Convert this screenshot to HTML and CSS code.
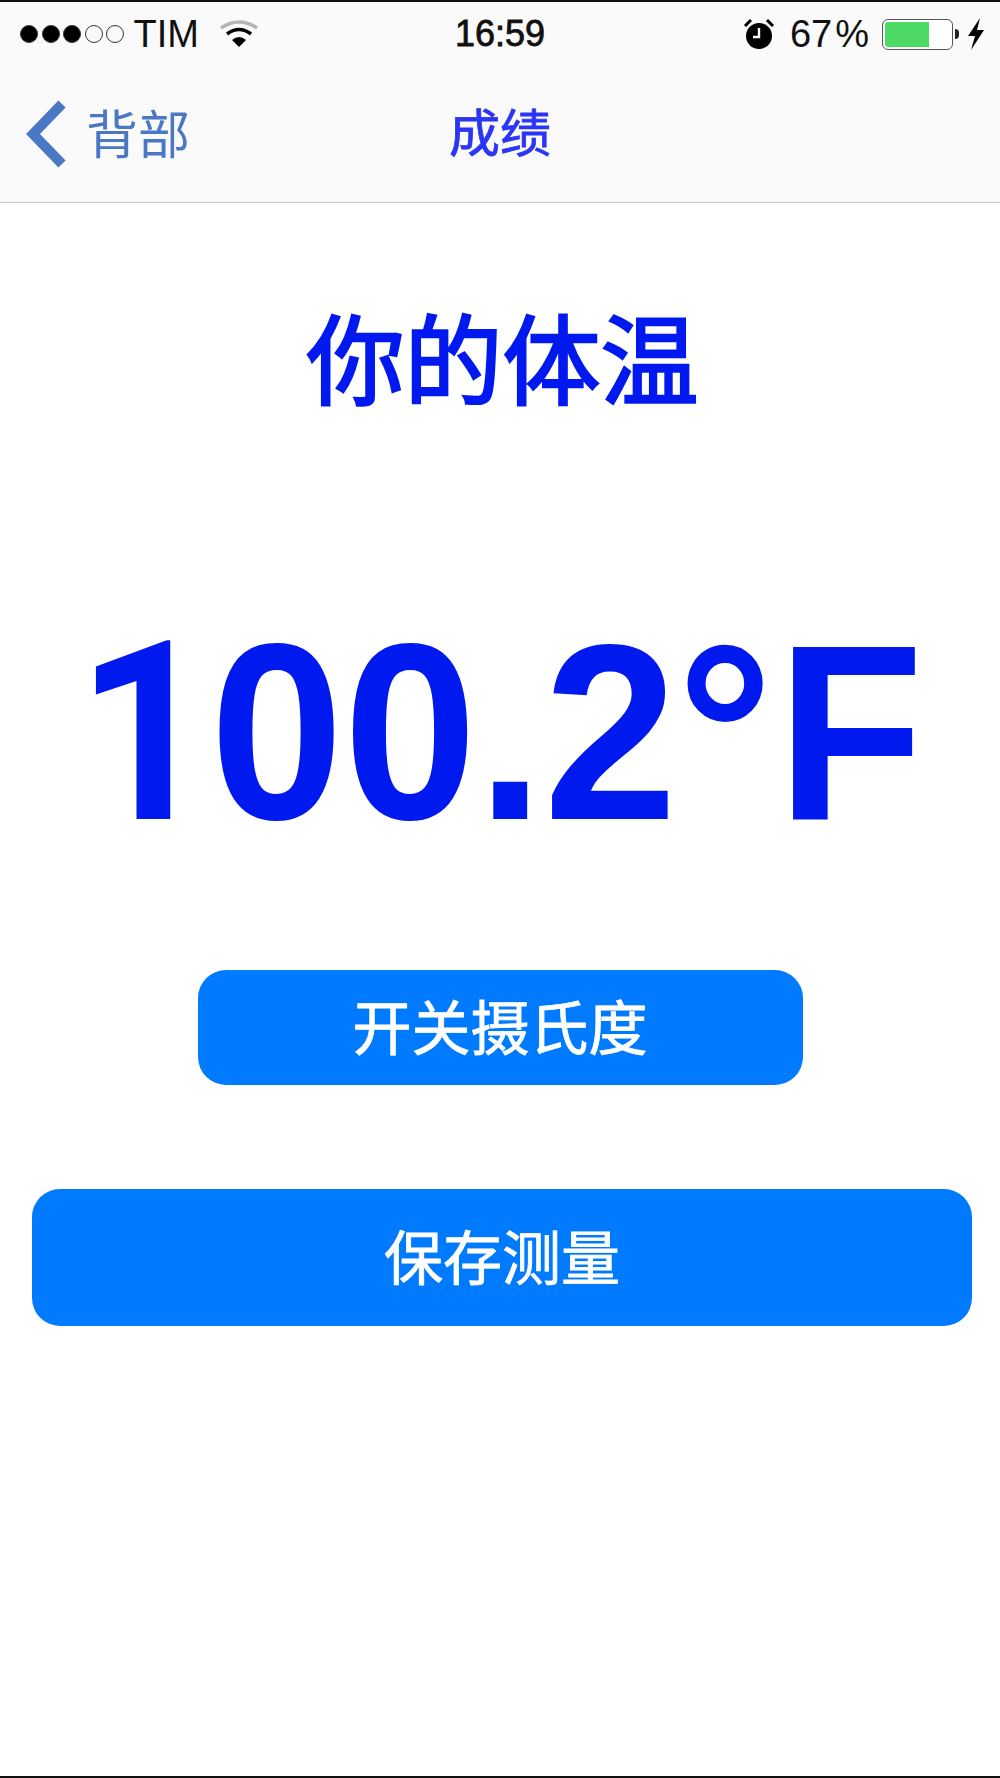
FILE: index.html
```html
<!DOCTYPE html>
<html lang="zh">
<head>
  <meta charset="UTF-8" />
  <title>成绩</title>
  <link rel="stylesheet" href="styles.css">
</head>
<body>
  <div class="phone">
    <header class="topbar">
      <div class="status">
        <div class="status-left">
          <span class="dot on"></span><span class="dot on"></span><span class="dot on"></span><span class="dot"></span><span class="dot"></span>
          <span class="carrier">TIM</span>
          <svg class="wifi" width="40" height="30" viewBox="0 0 40 30">
            <path d="M2 9 Q20 -3 38 9" fill="none" stroke="#b5b5b5" stroke-width="3.5"/>
            <path d="M8 15 Q20 6 32 15" fill="none" stroke="#000" stroke-width="3.5"/>
            <path d="M13 21 Q20 15 27 21 L20 28 Z" fill="#000"/>
          </svg>
        </div>
        <div class="clock">16:59</div>
        <div class="status-right">
          <svg class="alarm" width="32" height="32" viewBox="0 0 32 32">
            <circle cx="16" cy="18" r="13" fill="#000"/>
            <path d="M2 8 L8 2 M30 8 L24 2" stroke="#000" stroke-width="3"/>
            <path d="M16 10 V19 H10" fill="none" stroke="#fff" stroke-width="2.4"/>
          </svg>
          <span class="percent">67<span class="pct-sign">%</span></span>
          <div class="battery"><div class="battery-fill" style="width: 67%"></div></div>
          <span class="battery-tip"></span>
          <svg class="bolt" width="18" height="32" viewBox="0 0 18 32">
            <path d="M13 0 L1 18 H8 L4 32 L17 12 H10 Z" fill="#000"/>
          </svg>
        </div>
      </div>
      <nav class="navbar">
        <a class="back">
          <svg width="42" height="68" viewBox="0 0 42 68">
            <path d="M37 4 L8 34 L37 64" fill="none" stroke="#4a78c4" stroke-width="10"/>
          </svg>
          <span>背部</span>
        </a>
        <div class="nav-title">成绩</div>
      </nav>
    </header>

    <main class="content">
      <h1 class="heading">你的体温</h1>
      <div class="reading"><span class="one">1</span>00.2<span class="deg">°</span>F</div>
      <button class="btn btn-small">开关摄氏度</button>
      <button class="btn btn-wide">保存测量</button>
    </main>
  </div>
</body>
</html>
```

FILE: styles.css
```css
* {
  box-sizing: border-box;
}

html, body {
  margin: 0;
  height: 100%;
}

body {
  font-family: "Liberation Sans", "Noto Sans CJK SC", sans-serif;
  background: #fff;
}

.phone {
  height: 1778px;
  display: flex;
  flex-direction: column;
  border-top: 2px solid #111;
  border-bottom: 2px solid #111;
}

.topbar {
  height: 201px;
  background: #fafafa;
  border-bottom: 1px solid #c4c4c4;
}

.status {
  height: 64px;
  padding: 0 15px 0 20px;
  position: relative;
  display: flex;
  align-items: center;
  justify-content: space-between;
}

.status-left, .status-right {
  display: flex;
  align-items: center;
}

.dot {
  width: 18px;
  height: 18px;
  margin-right: 3.5px;
  border-radius: 50%;
  border: 1px solid #333;
}

.dot.on {
  background: #000;
}

.carrier {
  font-size: 38px;
  margin-left: 6px;
  color: #111;
}

.wifi {
  margin-left: 20px;
}

.clock {
  position: absolute;
  left: 0;
  right: 0;
  text-align: center;
  font-size: 36px;
  color: #111;
  -webkit-text-stroke: 0.8px #111;
}

.percent {
  font-size: 38px;
  margin-left: 15px;
  margin-right: 13px;
  color: #111;
}

.pct-sign {
  margin-left: 3px;
}

.battery {
  width: 71px;
  height: 31px;
  padding: 2px;
  border: 1.5px solid #555;
  border-radius: 6px;
  background: #fff;
}

.battery-fill {
  height: 100%;
  background: #4cd964;
  border-radius: 3px 0 0 3px;
}

.battery-tip {
  width: 4px;
  height: 10px;
  margin-left: 2px;
  background: #222;
  border-radius: 0 5px 5px 0;
}

.bolt {
  margin-left: 8px;
}

.navbar {
  height: 134px;
  position: relative;
  display: flex;
  align-items: center;
  justify-content: center;
}

.back {
  position: absolute;
  left: 25px;
  top: 32px;
  display: flex;
  align-items: center;
  gap: 19px;
  color: #4a78c4;
  font-size: 52px;
}

.back span {
  margin-top: -4px;
}

.nav-title {
  font-size: 51px;
  color: #2b35f5;
  margin-top: -6px;
  -webkit-text-stroke: 0.8px #2b35f5;
}

.content {
  display: flex;
  flex-direction: column;
  align-items: center;
}

.heading {
  margin: 105px 0 0 5px;
  font-size: 98px;
  line-height: 110px;
  font-weight: normal;
  color: #0019ef;
  -webkit-text-stroke: 2.5px #0019ef;
}

.reading {
  margin-top: 184px;
  font-size: 240px;
  line-height: 260px;
  font-weight: bold;
  color: #0019ef;
  transform: scaleY(1.045);
}

.one {
  font-family: Roboto, "Liberation Sans", sans-serif;
  letter-spacing: -4px;
}

.deg {
  letter-spacing: 4px;
}

.btn {
  border: none;
  background: #007aff;
  color: #fff;
  font-family: inherit;
  font-size: 59px;
  padding: 0 0 6px;
  -webkit-text-stroke: 0.8px #fff;
}

.btn-small {
  margin-top: 107px;
  width: 605px;
  height: 115px;
  border-radius: 28px;
}

.btn-wide {
  margin-top: 104px;
  margin-left: 4px;
  width: 940px;
  height: 137px;
  border-radius: 28px;
}
```
